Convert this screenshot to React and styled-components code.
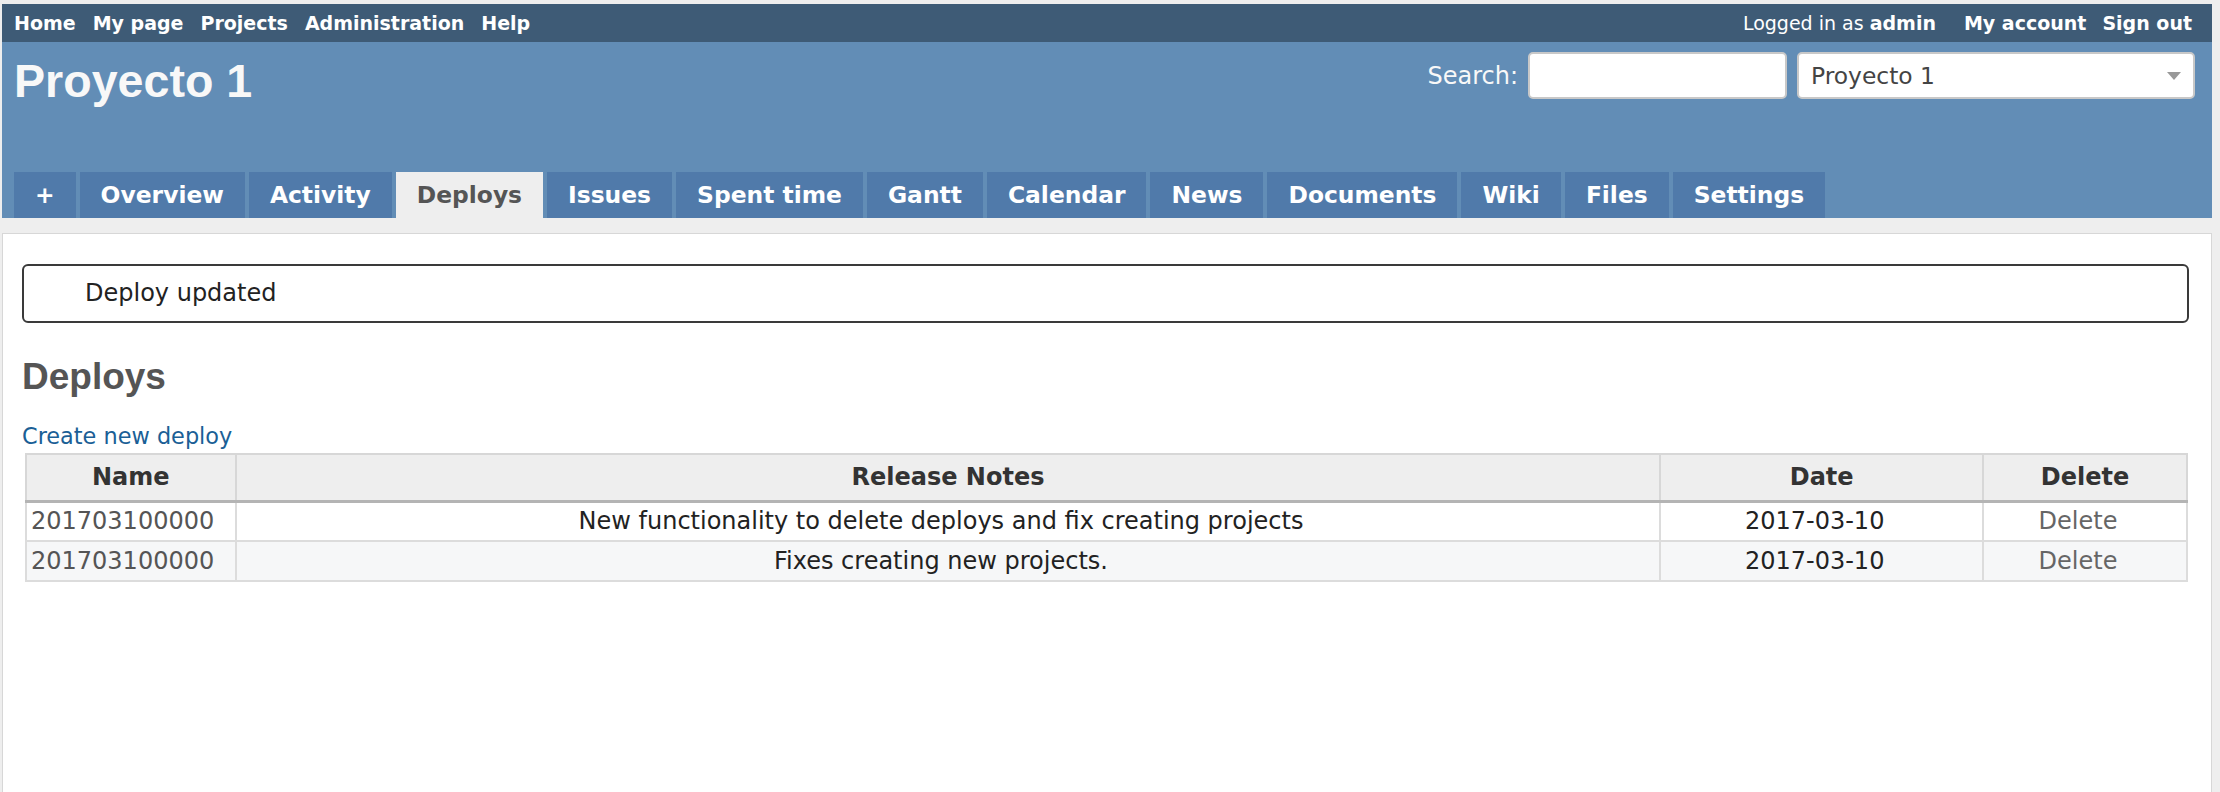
import React from 'react'
import styled, { createGlobalStyle } from 'styled-components'

const GlobalStyle = createGlobalStyle`
  html, body {
    margin: 0;
    padding: 0;
    background: #eeeeee;
  }
  body {
    font-family: "DejaVu Sans", Verdana, sans-serif;
    color: #333;
  }
  * {
    box-sizing: border-box;
  }
`

const Wrapper = styled.div`
  margin: 4px 8px 0 2px;
`

const TopMenu = styled.div`
  display: flex;
  align-items: center;
  height: 38px;
  padding: 0 20px 0 12px;
  background: #3e5b76;
  color: #fff;
  font-size: 19px;
`

const MenuList = styled.div`
  display: flex;
  align-items: center;
  gap: ${props => props.$gap || 17}px;
`

const MenuLink = styled.a`
  color: #fff;
  font-weight: bold;
  text-decoration: none;
  cursor: pointer;
`

const LoggedAs = styled.span`
  margin-left: auto;
  margin-right: 28px;
  color: #fff;

  b {
    font-weight: bold;
  }
`

const Header = styled.div`
  display: flex;
  flex-direction: column;
  height: 176px;
  padding: 10px 17px 0 12px;
  background: #628db6;
  color: #f8f8f8;
`

const HeaderTop = styled.div`
  display: flex;
  align-items: flex-start;
  justify-content: space-between;
`

const Title = styled.h1`
  margin: 6px 0 0 0;
  font-family: "Liberation Sans", Arial, sans-serif;
  font-size: 46.6px;
  line-height: 1;
  font-weight: bold;
  color: #f8f8f8;
`

const Search = styled.div`
  display: flex;
  align-items: center;
  gap: 10px;
`

const SearchLabel = styled.label`
  font-size: 24px;
  color: #f8f8f8;
`

const SearchInput = styled.input`
  width: 259px;
  height: 47px;
  border: 2px solid #c8c8c8;
  border-radius: 5px;
  background: #fff;
  outline: none;
`

const ProjectSelect = styled.div`
  display: flex;
  align-items: center;
  justify-content: space-between;
  width: 398px;
  height: 47px;
  padding: 0 12px 0 12px;
  border: 2px solid #c8c8c8;
  border-radius: 5px;
  background: #fff;
  color: #444;
  font-size: 23.4px;
`

const Arrow = styled.span`
  width: 0;
  height: 0;
  border-left: 7px solid transparent;
  border-right: 7px solid transparent;
  border-top: 8px solid #999;
`

const Tabs = styled.ul`
  display: flex;
  gap: 4px;
  margin: auto 0 0 0;
  padding: 0;
  list-style: none;
`

const Tab = styled.li`
  height: 46px;
  padding: 0 21px;
  line-height: 46px;
  font-size: 23.4px;
  font-weight: bold;
  background: ${props => (props.$selected ? '#eeeeee' : '#507aaa')};
  color: ${props => (props.$selected ? '#555' : '#fff')};
  cursor: pointer;
`

const Main = styled.div`
  padding-top: 15px;
  background: #eeeeee;
`

const Content = styled.div`
  min-height: calc(100vh - 233px);
  padding: 30px 22px 20px 19px;
  background: #fff;
  border: 1px solid #d7d7d7;
  border-bottom: none;
`

const Flash = styled.div`
  height: 59px;
  padding-left: 61px;
  border: 2px solid #3a3a3a;
  border-radius: 6px;
  font-size: 24px;
  line-height: 55px;
  color: #222;
`

const Heading = styled.h2`
  margin: 35px 0 0 0;
  font-family: "Liberation Sans", Arial, sans-serif;
  font-size: 37px;
  line-height: 1;
  font-weight: bold;
  color: #555;
`

const NewLink = styled.a`
  display: block;
  margin-top: 26px;
  font-size: 22.4px;
  line-height: 30px;
  color: #1b5f96;
  text-decoration: none;
  cursor: pointer;
`

const Table = styled.table`
  width: calc(100% - 4px);
  margin: 2px 1px 0 3px;
  border-collapse: collapse;
  table-layout: fixed;
  border: 2px solid #d7d7d7;
  font-size: 24px;
`

const Th = styled.th`
  width: ${props => props.$w};
  height: 47px;
  padding: 0 6px;
  background: #eeeeee;
  border: 2px solid #d7d7d7;
  border-bottom: 3px solid #b4b4b4;
  color: #333;
  font-weight: bold;
  text-align: center;
`

const Row = styled.tr`
  background: ${props => (props.$odd ? '#f6f7f8' : '#fff')};
`

const Td = styled.td`
  height: 40px;
  padding: ${props => (props.$align === 'left' ? '0 4px' : '0 18px 0 4px')};
  border: 2px solid #dcdcdc;
  text-align: ${props => props.$align || 'center'};
  color: ${props => props.$color || '#222'};
  white-space: nowrap;
`

const tabs = [
  '+', 'Overview', 'Activity', 'Deploys', 'Issues', 'Spent time', 'Gantt',
  'Calendar', 'News', 'Documents', 'Wiki', 'Files', 'Settings',
]

const deploys = [
  { id: 1, name: '201703100000', notes: 'New functionality to delete deploys and fix creating projects', date: '2017-03-10' },
  { id: 2, name: '201703100000', notes: 'Fixes creating new projects.', date: '2017-03-10' },
]

export default function App() {
  return (
    <>
      <GlobalStyle />
      <Wrapper>
        <TopMenu>
          <MenuList>
            <MenuLink>Home</MenuLink>
            <MenuLink>My page</MenuLink>
            <MenuLink>Projects</MenuLink>
            <MenuLink>Administration</MenuLink>
            <MenuLink>Help</MenuLink>
          </MenuList>
          <LoggedAs>Logged in as <b>admin</b></LoggedAs>
          <MenuList $gap={16}>
            <MenuLink>My account</MenuLink>
            <MenuLink>Sign out</MenuLink>
          </MenuList>
        </TopMenu>
        <Header>
          <HeaderTop>
            <Title>Proyecto 1</Title>
            <Search>
              <SearchLabel>Search:</SearchLabel>
              <SearchInput type="text" />
              <ProjectSelect>
                <span>Proyecto 1</span>
                <Arrow />
              </ProjectSelect>
            </Search>
          </HeaderTop>
          <Tabs>
            {tabs.map(t => (
              <Tab key={t} $selected={t === 'Deploys'}>{t}</Tab>
            ))}
          </Tabs>
        </Header>
        <Main>
          <Content>
            <Flash>Deploy updated</Flash>
            <Heading>Deploys</Heading>
            <NewLink>Create new deploy</NewLink>
            <Table>
              <thead>
                <tr>
                  <Th $w="9.7%">Name</Th>
                  <Th $w="65.93%">Release Notes</Th>
                  <Th $w="14.93%">Date</Th>
                  <Th $w="9.44%">Delete</Th>
                </tr>
              </thead>
              <tbody>
                {deploys.map((d, i) => (
                  <Row key={d.id} $odd={i % 2 === 1}>
                    <Td $align="left" $color="#555">{d.name}</Td>
                    <Td>{d.notes}</Td>
                    <Td>{d.date}</Td>
                    <Td $color="#666">Delete</Td>
                  </Row>
                ))}
              </tbody>
            </Table>
          </Content>
        </Main>
      </Wrapper>
    </>
  )
}
